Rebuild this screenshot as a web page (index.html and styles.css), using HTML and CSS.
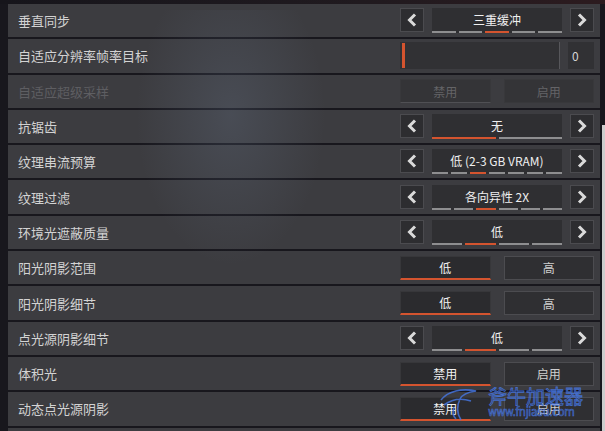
FILE: index.html
```html
<!DOCTYPE html>
<html>
<head>
    <meta charset="utf-8">
    <title>视频设置</title>
    <link rel="stylesheet" href="styles.css">
</head>
<body>
    <div class="topbar"></div>
    <div class="main">
        <div class="list">
            <div class="row">
                <span class="label">垂直同步</span>
                <div class="stepper">
                    <div class="arrow"><svg width="10" height="14" viewBox="0 0 10 14"><polyline points="8,1.5 2.5,7 8,12.5"/></svg></div>
                    <div class="value"><span class="value-text">三重缓冲</span><div class="segs"><i></i><i></i><i class="on"></i><i></i><i></i></div></div>
                    <div class="arrow"><svg width="10" height="14" viewBox="0 0 10 14"><polyline points="2,1.5 7.5,7 2,12.5"/></svg></div>
                </div>
            </div>
            <div class="row">
                <span class="label">自适应分辨率帧率目标</span>
                <div class="slider">
                    <div class="track"><span class="marker"></span></div>
                    <div class="number">0</div>
                </div>
            </div>
            <div class="row">
                <span class="label dim">自适应超级采样</span>
                <div class="pair disabled">
                    <div class="opt on">禁用</div>
                    <div class="opt">启用</div>
                </div>
            </div>
            <div class="row">
                <span class="label">抗锯齿</span>
                <div class="stepper">
                    <div class="arrow"><svg width="10" height="14" viewBox="0 0 10 14"><polyline points="8,1.5 2.5,7 8,12.5"/></svg></div>
                    <div class="value"><span class="value-text">无</span><div class="segs"><i class="on"></i><i></i></div></div>
                    <div class="arrow"><svg width="10" height="14" viewBox="0 0 10 14"><polyline points="2,1.5 7.5,7 2,12.5"/></svg></div>
                </div>
            </div>
            <div class="row">
                <span class="label">纹理串流预算</span>
                <div class="stepper">
                    <div class="arrow"><svg width="10" height="14" viewBox="0 0 10 14"><polyline points="8,1.5 2.5,7 8,12.5"/></svg></div>
                    <div class="value"><span class="value-text">低 (2-3 GB VRAM)</span><div class="segs"><i></i><i></i><i class="on"></i><i></i><i></i><i></i><i></i></div></div>
                    <div class="arrow"><svg width="10" height="14" viewBox="0 0 10 14"><polyline points="2,1.5 7.5,7 2,12.5"/></svg></div>
                </div>
            </div>
            <div class="row">
                <span class="label">纹理过滤</span>
                <div class="stepper">
                    <div class="arrow"><svg width="10" height="14" viewBox="0 0 10 14"><polyline points="8,1.5 2.5,7 8,12.5"/></svg></div>
                    <div class="value"><span class="value-text">各向异性 2X</span><div class="segs"><i></i><i></i><i class="on"></i><i></i><i></i><i></i></div></div>
                    <div class="arrow"><svg width="10" height="14" viewBox="0 0 10 14"><polyline points="2,1.5 7.5,7 2,12.5"/></svg></div>
                </div>
            </div>
            <div class="row">
                <span class="label">环境光遮蔽质量</span>
                <div class="stepper">
                    <div class="arrow"><svg width="10" height="14" viewBox="0 0 10 14"><polyline points="8,1.5 2.5,7 8,12.5"/></svg></div>
                    <div class="value"><span class="value-text">低</span><div class="segs"><i></i><i class="on"></i><i></i><i></i></div></div>
                    <div class="arrow"><svg width="10" height="14" viewBox="0 0 10 14"><polyline points="2,1.5 7.5,7 2,12.5"/></svg></div>
                </div>
            </div>
            <div class="row">
                <span class="label">阳光阴影范围</span>
                <div class="pair">
                    <div class="opt on">低</div>
                    <div class="opt">高</div>
                </div>
            </div>
            <div class="row">
                <span class="label">阳光阴影细节</span>
                <div class="pair">
                    <div class="opt on">低</div>
                    <div class="opt">高</div>
                </div>
            </div>
            <div class="row">
                <span class="label">点光源阴影细节</span>
                <div class="stepper">
                    <div class="arrow"><svg width="10" height="14" viewBox="0 0 10 14"><polyline points="8,1.5 2.5,7 8,12.5"/></svg></div>
                    <div class="value"><span class="value-text">低</span><div class="segs"><i></i><i class="on"></i><i></i><i></i></div></div>
                    <div class="arrow"><svg width="10" height="14" viewBox="0 0 10 14"><polyline points="2,1.5 7.5,7 2,12.5"/></svg></div>
                </div>
            </div>
            <div class="row">
                <span class="label">体积光</span>
                <div class="pair">
                    <div class="opt on">禁用</div>
                    <div class="opt">启用</div>
                </div>
            </div>
            <div class="row">
                <span class="label">动态点光源阴影</span>
                <div class="pair">
                    <div class="opt on">禁用</div>
                    <div class="opt">启用</div>
                </div>
            </div>
            <div class="row"></div>
        </div>
        <div class="scrollbar"></div>
    </div>

    <div class="glow"></div>

    <!-- watermark of the source site -->
    <div class="watermark">
        <svg class="wm-logo" width="38" height="36" viewBox="0 0 38 36">
            <path d="M1 15 C8 6 22 3 36 6 C28 7 22 10 20 14 M4 20 C12 14 22 13 31 16 M20 14 C17 20 16 27 21 35 M14 22 C12 27 13 31 16 34"/>
        </svg>
        <div class="wm-text">
            <span class="wm-cn">斧牛加速器</span>
            <span class="wm-url">www.fnjiasu.com</span>
        </div>
    </div>
</body>
</html>
```

FILE: styles.css
```css
body {
    margin: 0;
    width: 605px;
    height: 431px;
    overflow: hidden;
    background: #18171d;
    font-family: "Noto Sans CJK SC", "Noto Sans", sans-serif;
    display: flex;
    flex-direction: column;
}
.topbar {
    height: 4px;
    flex: none;
    background: linear-gradient(to right, #16151b, #201a1f 60%, #2c1b1f);
}
.main {
    display: flex;
    flex: 1;
    min-height: 0;
    overflow: hidden;
    padding-left: 8px;
}
.list {
    width: 592px;
    display: flex;
    flex-direction: column;
    gap: 2px;
}
.row {
    flex: none;
    height: 33.3px;
    box-sizing: border-box;
    display: flex;
    align-items: center;
    justify-content: space-between;
    padding: 0 6px 0 10px;
    background: #3c3c40;
}
.label {
    color: #d3d3d3;
    font-size: 13px;
}
.label.dim {
    color: #5e5e62;
}

/* stepper with arrows */
.stepper {
    display: flex;
    gap: 8px;
    width: 194px;
}
.arrow {
    width: 24px;
    height: 24px;
    box-sizing: border-box;
    border: 1px solid #4b4b4f;
    background: #2d2d30;
    display: flex;
    align-items: center;
    justify-content: center;
}
.arrow polyline {
    fill: none;
    stroke: #dadada;
    stroke-width: 3;
}
.value {
    width: 130px;
    height: 25px;
    display: flex;
    flex-direction: column;
    background: #2f2f32;
}
.value-text {
    flex: 1;
    text-align: center;
    color: #f0f0f0;
    font-size: 12px;
    line-height: 23px;
}
.segs {
    display: flex;
    gap: 3px;
    height: 2px;
}
.segs i {
    flex: 1;
    background: #8e8e90;
}
.segs i.on {
    background: #d4542f;
}

/* slider */
.slider {
    display: flex;
    gap: 8px;
    width: 194px;
    height: 27px;
}
.track {
    width: 160px;
    box-sizing: border-box;
    padding: 1px 2px;
    background: #313134;
    border-right: 1px solid #57575b;
}
.marker {
    display: block;
    width: 3px;
    height: 100%;
    background: #d4542f;
}
.number {
    flex: 1;
    background: #313134;
    color: #d6d6d6;
    font-size: 12px;
    line-height: 27px;
    padding-left: 4px;
}

/* two options */
.pair {
    display: flex;
    gap: 13px;
    width: 194px;
}
.opt {
    flex: 1;
    height: 24px;
    box-sizing: border-box;
    border: 1px solid #4c4c50;
    background: #2f2f32;
    color: #cfcfcf;
    font-size: 12px;
    display: flex;
    align-items: center;
    justify-content: center;
}
.opt.on {
    border-color: #37373a;
    border-bottom: 2px solid #d4542f;
    background: #2b2b2e;
    color: #f2f2f2;
}
.pair.disabled .opt {
    border-color: #38383b;
    background: #343437;
    color: #646467;
}
.pair.disabled .opt.on {
    border-bottom: 1px solid #505054;
}

.scrollbar {
    width: 3px;
    margin: 121px 0 0 2px;
    background: #cdcdcd;
}

.glow {
    position: absolute;
    left: 130px;
    top: 10px;
    width: 210px;
    height: 300px;
    pointer-events: none;
    background: radial-gradient(ellipse 45% 50% at 48% 35%, rgba(130, 150, 180, 0.18), rgba(130, 150, 180, 0) 100%);
}

.watermark {
    position: absolute;
    left: 440px;
    top: 385px;
    display: flex;
    gap: 10px;
    pointer-events: none;
}
.wm-logo path {
    fill: none;
    stroke: rgba(70, 120, 230, 0.8);
    stroke-width: 1.6;
}
.wm-text {
    display: flex;
    flex-direction: column;
}
.wm-cn {
    font-size: 19px;
    line-height: 21px;
    color: rgba(70, 120, 230, 0.15);
    -webkit-text-stroke: 0.8px rgba(70, 120, 230, 0.85);
}
.wm-url {
    font-family: "DejaVu Sans Condensed", "DejaVu Sans", sans-serif;
    font-size: 12px;
    line-height: 13px;
    letter-spacing: -0.3px;
    color: rgba(70, 120, 230, 0.2);
    -webkit-text-stroke: 0.6px rgba(70, 120, 230, 0.85);
}
```
